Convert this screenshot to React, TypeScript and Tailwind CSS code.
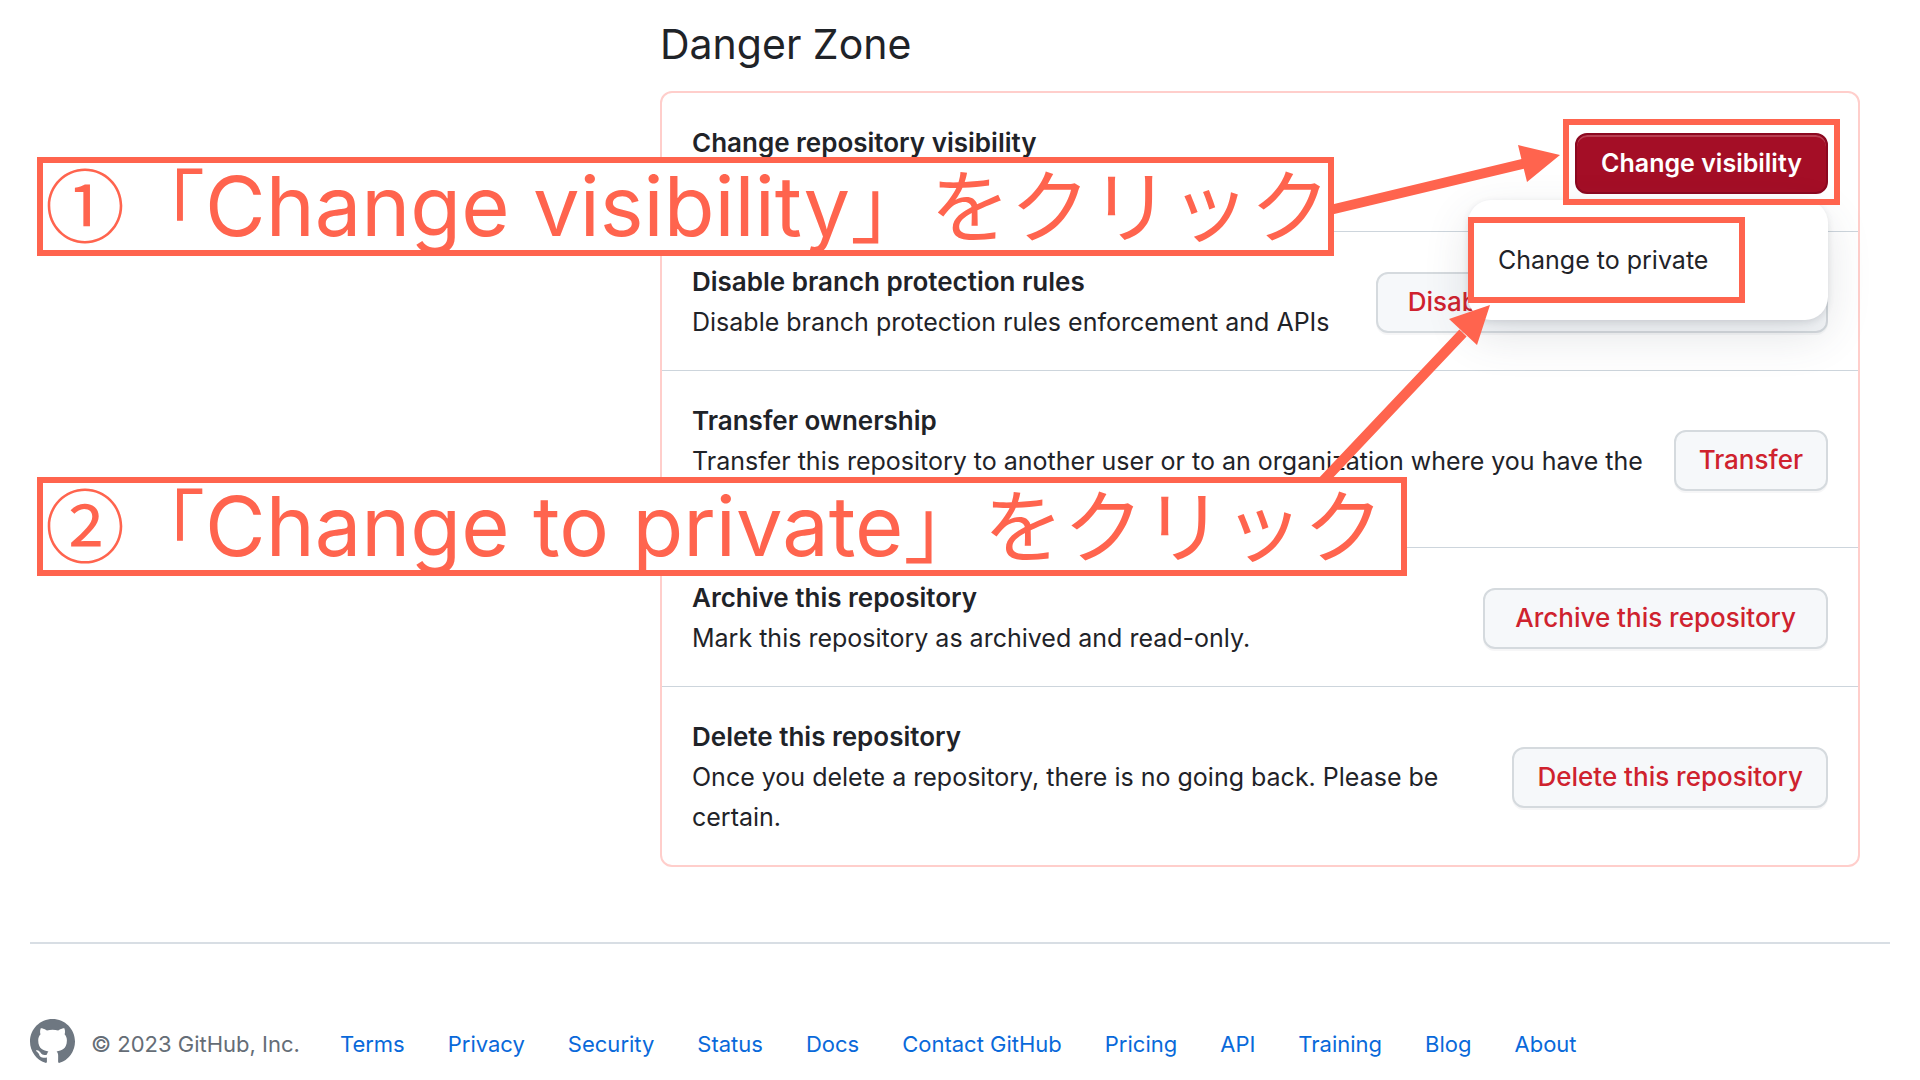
import type { ReactNode } from "react";

type Row = {
  title: string;
  text?: string;
  action: string;
  tall?: boolean;
  wide?: boolean;
};

const rows: Row[] = [
  {
    title: "Disable branch protection rules",
    text: "Disable branch protection rules enforcement and APIs",
    action: "Disable branch protection rules",
    wide: true,
  },
  {
    title: "Transfer ownership",
    text: "Transfer this repository to another user or to an organization where you have the",
    action: "Transfer",
    tall: true,
  },
  {
    title: "Archive this repository",
    text: "Mark this repository as archived and read-only.",
    action: "Archive this repository",
    wide: true,
  },
  {
    title: "Delete this repository",
    text: "Once you delete a repository, there is no going back. Please be certain.",
    action: "Delete this repository",
    tall: true,
  },
];

const links = [
  "Terms",
  "Privacy",
  "Security",
  "Status",
  "Docs",
  "Contact GitHub",
  "Pricing",
  "API",
  "Training",
  "Blog",
  "About",
];

function GitHubMark() {
  return (
    <svg viewBox="0 0 16 16" className="size-[45px] fill-[#6e7781]" role="img" aria-label="GitHub">
      <path d="M8 0C3.58 0 0 3.58 0 8c0 3.54 2.29 6.53 5.47 7.59.4.07.55-.17.55-.38 0-.19-.01-.82-.01-1.49-2.01.37-2.53-.49-2.69-.94-.09-.23-.48-.94-.82-1.13-.28-.15-.68-.52-.01-.53.63-.01 1.08.58 1.23.82.72 1.21 1.87.87 2.33.66.07-.52.28-.87.51-1.07-1.78-.2-3.64-.89-3.64-3.95 0-.87.31-1.59.82-2.15-.08-.2-.36-1.02.08-2.12 0 0 .67-.21 2.2.82.64-.18 1.32-.27 2-.27.68 0 1.36.09 2 .27 1.53-1.04 2.2-.82 2.2-.82.44 1.1.16 1.92.08 2.12.51.56.82 1.27.82 2.15 0 3.07-1.87 3.75-3.65 3.95.29.25.54.73.54 1.48 0 1.07-.01 1.93-.01 2.2 0 .21.15.46.55.38A8.012 8.012 0 0 0 16 8c0-4.42-3.58-8-8-8z" />
    </svg>
  );
}

function Item({ title, text, tall, children }: { title: string; text?: string; tall?: boolean; children: ReactNode }) {
  return (
    <li className="flex items-center gap-3 border-b border-[#cdd5dc] px-[30px] pt-[30px] pb-[28px] last:border-b-0">
      <div className={tall ? "min-h-[118px] flex-1" : "min-h-[80px] flex-1"}>
        <h3 className="text-[26px] leading-[40px] font-semibold">{title}</h3>
        {text && <p>{text}</p>}
      </div>
      {children}
    </li>
  );
}

/* Numbered instruction laid over the page */
function Callout({ mark, label, place }: { mark: string; label: string; place: string }) {
  return (
    <div
      className={`absolute left-[37px] h-[99px] border-6 border-[#ff644e] bg-white pl-[2px] text-[80px] leading-[76px] whitespace-nowrap text-[#ff644e] ${place}`}
    >
      <span className="font-['Noto_Sans_CJK_JP',sans-serif]">{mark}「</span>
      <span className="text-[83px]">{label}</span>
      <span className="font-['Noto_Sans_CJK_JP',sans-serif]">」をクリック</span>
    </div>
  );
}

export default function App() {
  return (
    <div className="relative min-h-screen overflow-hidden bg-white font-['Inter','Noto_Sans_CJK_JP',sans-serif] text-[25px] leading-[40px] text-[#1f2328]">
      <main className="pt-[10px] pr-[60px] pl-[660px]">
        <h2 className="text-[41px] leading-[68px]">Danger Zone</h2>
        <ul className="mt-[13px] rounded-xl border-2 border-[#ffcecb]">
          <Item title="Change repository visibility">
            <div className="relative z-10">
              <button
                type="button"
                aria-haspopup="menu"
                aria-expanded="true"
                className="h-[61px] rounded-xl border-2 border-[#8b0820] bg-[#a40e26] px-[24px] font-semibold text-white shadow-[inset_0_2px_0_#b83e51]"
              >
                Change visibility
              </button>
              <div
                role="menu"
                className="absolute top-[67px] right-0 flex h-[120px] w-[360px] items-center rounded-[23px] bg-white px-[30px] shadow-[0_2px_6px_rgba(66,74,83,0.14),0_16px_45px_rgba(66,74,83,0.14)]"
              >
                <button type="button" role="menuitem">
                  Change to private
                </button>
              </div>
            </div>
          </Item>
          {rows.map((r) => (
            <Item key={r.action} title={r.title} text={r.text} tall={r.tall}>
              <button
                type="button"
                className={`h-[61px] shrink-0 rounded-xl border-2 border-[#d5dade] bg-[#f6f8fa] text-[26px] font-medium text-[#cf222e] shadow-[0_2px_0_rgba(31,35,40,0.04)] ${
                  r.wide ? "px-[30px]" : "px-[23px]"
                }`}
              >
                {r.action}
              </button>
            </Item>
          ))}
        </ul>
      </main>

      <footer className="mx-[30px] mt-[75px] flex items-end border-t-2 border-[#d8dee4] pt-[75px] text-[22px] leading-[39px]">
        <GitHubMark />
        <span className="ml-4 text-[#656d76]">© 2023 GitHub, Inc.</span>
        <nav className="ml-[40px] flex gap-[43px]">
          {links.map((l) => (
            <a key={l} href="#" className="text-[#0969da]">
              {l}
            </a>
          ))}
        </nav>
      </footer>

      <div className="pointer-events-none absolute inset-0 z-20">
        <svg width="1920" height="1080" viewBox="0 0 1920 1080" className="absolute top-0 left-0 fill-[#ff644e] stroke-[#ff644e]">
          <path d="M1330 210 1526 163M1322 482 1463 333" strokeWidth="10" />
          <path d="M1518 145 1560 155 1527 182ZM1449 319 1490 305 1477 345Z" stroke="none" />
        </svg>
        <div className="absolute top-[119px] left-[1563px] h-[86px] w-[277px] border-6 border-[#ff644e]" />
        <div className="absolute top-[217px] left-[1468px] h-[86px] w-[277px] border-6 border-[#ff644e]" />
        <Callout mark="①" label="Change visibility" place="top-[157px] w-[1297px]" />
        <Callout mark="②" label="Change to private" place="top-[477px] w-[1370px]" />
      </div>
    </div>
  );
}
